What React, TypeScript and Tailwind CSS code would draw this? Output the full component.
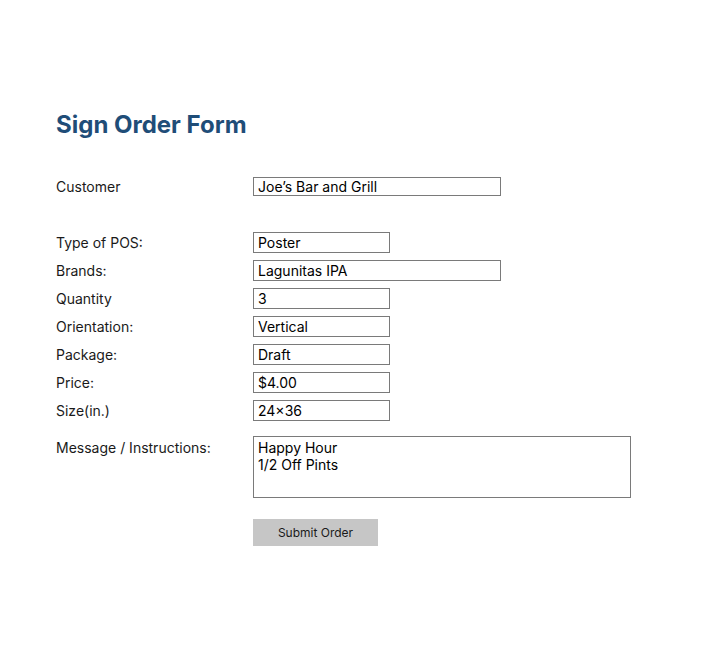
import React from 'react';

interface FieldRowProps {
  label: string;
  value: string;
  width: string;
}

const FieldRow: React.FC<FieldRowProps> = ({ label, value, width }) => {
  return (
    <div className="flex items-center">
      <label className="w-[197px] shrink-0 text-[14px] leading-[17px] text-[#1a1a1a]">{label}</label>
      <input
        readOnly
        value={value}
        className={`${width} h-[21px] border border-[#7a7a7a] px-[4px] text-[14px] text-black outline-none bg-white`}
      />
    </div>
  );
};

const fields = [
  { label: 'Type of POS:', value: 'Poster', width: 'w-[137px]' },
  { label: 'Brands:', value: 'Lagunitas IPA', width: 'w-[248px]' },
  { label: 'Quantity', value: '3', width: 'w-[137px]' },
  { label: 'Orientation:', value: 'Vertical', width: 'w-[137px]' },
  { label: 'Package:', value: 'Draft', width: 'w-[137px]' },
  { label: 'Price:', value: '$4.00', width: 'w-[137px]' },
  { label: 'Size(in.)', value: '24×36', width: 'w-[137px]' },
];

export default function App() {
  return (
    <div className="min-h-screen bg-white pl-[56px] pt-[109px] font-['Inter',sans-serif]">
      {/* Title */}
      <h1 className="text-[24px] leading-[32px] font-bold text-[#1f4d78]">Sign Order Form</h1>

      {/* Customer */}
      <div className="mt-[36px] flex items-center">
        <label className="w-[197px] shrink-0 text-[14px] leading-[17px] text-[#1a1a1a]">Customer</label>
        <input
          readOnly
          value="Joe’s Bar and Grill"
          className="w-[248px] h-[19px] border border-[#7a7a7a] px-[4px] text-[14px] leading-[17px] text-black outline-none bg-white"
        />
      </div>

      {/* Order details */}
      <div className="mt-[36px] flex flex-col gap-[7px]">
        {fields.map((f) => (
          <FieldRow key={f.label} label={f.label} value={f.value} width={f.width} />
        ))}
      </div>

      {/* Message */}
      <div className="mt-[15px] flex items-start">
        <label className="w-[197px] shrink-0 pt-[3px] text-[14px] leading-[17px] text-[#1a1a1a]">
          Message / Instructions:
        </label>
        <textarea
          readOnly
          defaultValue={'Happy Hour\n1/2 Off Pints'}
          className="w-[378px] h-[62px] resize-none border border-[#7a7a7a] px-[4px] pt-[2px] text-[14px] leading-[17px] text-black outline-none bg-white"
        />
      </div>

      {/* Submit */}
      <button className="mt-[21px] ml-[197px] w-[125px] h-[27px] bg-[#c6c6c6] text-[12px] text-[#1a1a1a]">
        Submit Order
      </button>
    </div>
  );
}
